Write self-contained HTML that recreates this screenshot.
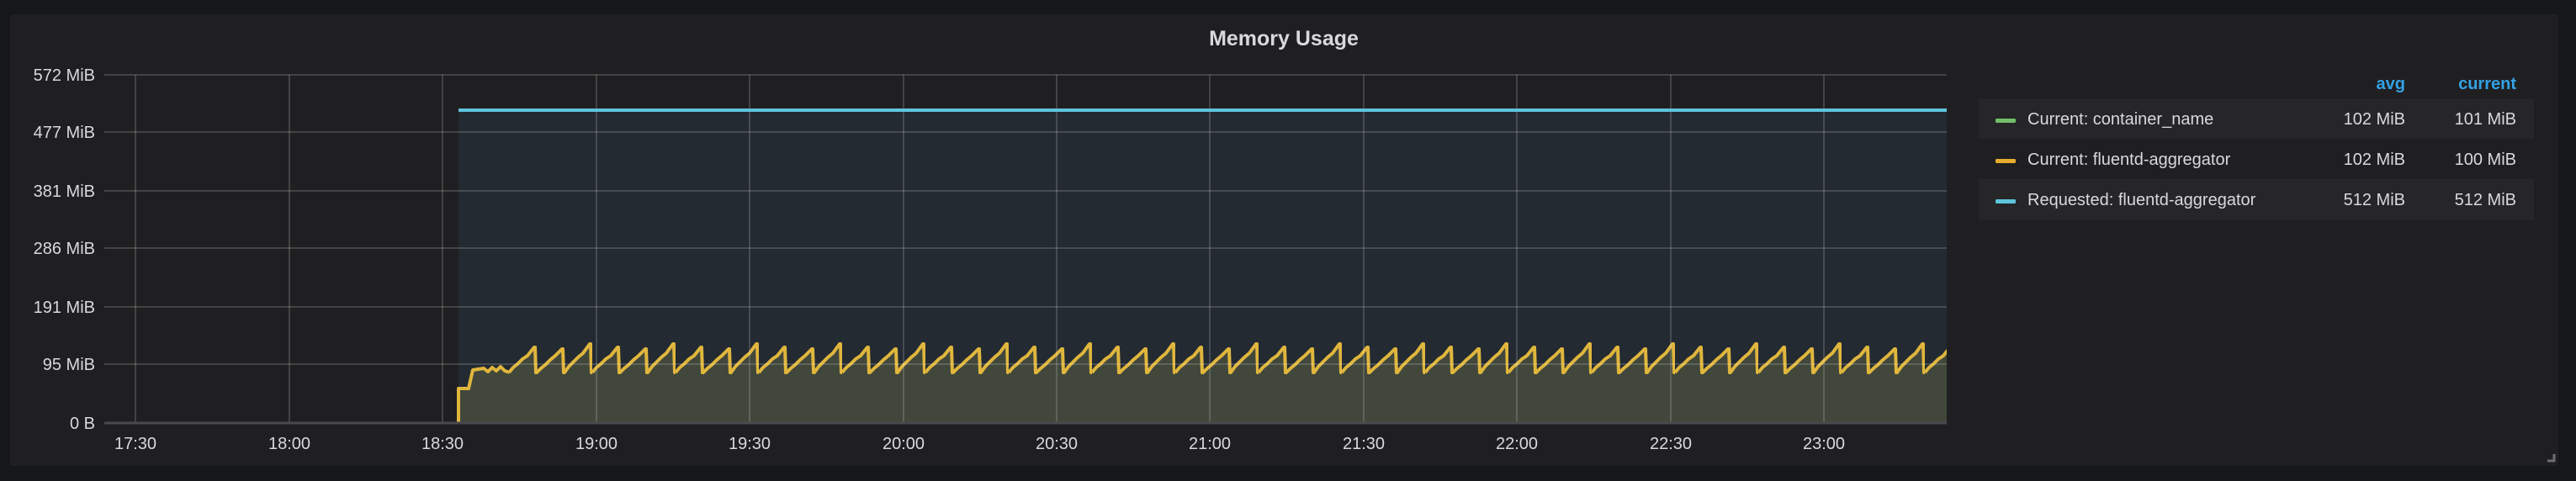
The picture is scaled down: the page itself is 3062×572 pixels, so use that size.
<!DOCTYPE html>
<html><head><meta charset="utf-8"><style>
html,body{margin:0;padding:0;background:#161719;width:3062px;height:572px;overflow:hidden}
svg{display:block}
text{font-family:"Liberation Sans",sans-serif}
</style></head><body>
<svg width="3062" height="572" viewBox="0 0 3062 572" xmlns="http://www.w3.org/2000/svg">
<defs>
<pattern id="teeth" patternUnits="userSpaceOnUse" x="605" y="0" width="99" height="572">
<path d="M0,443 l5,-6 l5,-4 l6,-6 l6,-4 l8,-10 l1,0 l1,30 l1,0 l5,-5 l5,-4 l6,-6 l6,-5 l8,-8 l1,0 l1,28 l1,0 l5,-7 l5,-5 l6,-6 l6,-5 l8,-11 l1,0 l1,34 l1,0 L99,503 L0,503 Z" fill="#41473b"/>
<path d="M0,443 l5,-6 l5,-4 l6,-6 l6,-4 l8,-10 l1,0 l1,30 l1,0 l5,-5 l5,-4 l6,-6 l6,-5 l8,-8 l1,0 l1,28 l1,0 l5,-7 l5,-5 l6,-6 l6,-5 l8,-11 l1,0 l1,34 l1,0" fill="none" stroke="#e0b63d" stroke-width="4" stroke-linejoin="round"/>
</pattern>
</defs>
<rect x="12" y="17" width="3029" height="537" rx="3" fill="#1f1f21"/>
<text x="1526" y="54" text-anchor="middle" font-size="25" font-weight="bold" fill="#d8d9da">Memory Usage</text>
<rect x="545" y="131" width="1769" height="372" fill="#232a31"/>
<path d="M545,503 L545,462 L557,462 L562,440 L575,438 L580,442 L585,437 L590,441 L595,436 L600,441 L605,443 L605,503 Z" fill="#41473b"/>
<path d="M545,503 L545,462 L557,462 L562,440 L575,438 L580,442 L585,437 L590,441 L595,436 L600,441 L606,443" fill="none" stroke="#e0b63d" stroke-width="4" stroke-linejoin="round"/>
<rect x="605" y="380" width="1709" height="123" fill="url(#teeth)"/>
<g stroke="#ffffff" stroke-opacity="0.16" stroke-width="2">
<line x1="124" y1="89" x2="2314" y2="89"/>
<line x1="124" y1="157" x2="2314" y2="157"/>
<line x1="124" y1="227" x2="2314" y2="227"/>
<line x1="124" y1="295" x2="2314" y2="295"/>
<line x1="124" y1="365" x2="2314" y2="365"/>
<line x1="124" y1="433" x2="2314" y2="433"/>
<line x1="161" y1="89" x2="161" y2="503"/>
<line x1="344" y1="89" x2="344" y2="503"/>
<line x1="526" y1="89" x2="526" y2="503"/>
<line x1="709" y1="89" x2="709" y2="503"/>
<line x1="891" y1="89" x2="891" y2="503"/>
<line x1="1074" y1="89" x2="1074" y2="503"/>
<line x1="1256" y1="89" x2="1256" y2="503"/>
<line x1="1438" y1="89" x2="1438" y2="503"/>
<line x1="1621" y1="89" x2="1621" y2="503"/>
<line x1="1803" y1="89" x2="1803" y2="503"/>
<line x1="1986" y1="89" x2="1986" y2="503"/>
<line x1="2168" y1="89" x2="2168" y2="503"/>
</g>
<line x1="124" y1="503" x2="2314" y2="503" stroke="#4a4a4d" stroke-width="3"/>
<line x1="545" y1="131" x2="2314" y2="131" stroke="#5ec4dc" stroke-width="4"/>
<g font-size="20" fill="#d8d9da" text-anchor="end">
<text x="113" y="96">572 MiB</text>
<text x="113" y="164">477 MiB</text>
<text x="113" y="234">381 MiB</text>
<text x="113" y="302">286 MiB</text>
<text x="113" y="372">191 MiB</text>
<text x="113" y="440">95 MiB</text>
<text x="113" y="510">0 B</text>
</g>
<g font-size="20" fill="#d8d9da" text-anchor="middle">
<text x="161" y="534">17:30</text>
<text x="344" y="534">18:00</text>
<text x="526" y="534">18:30</text>
<text x="709" y="534">19:00</text>
<text x="891" y="534">19:30</text>
<text x="1074" y="534">20:00</text>
<text x="1256" y="534">20:30</text>
<text x="1438" y="534">21:00</text>
<text x="1621" y="534">21:30</text>
<text x="1803" y="534">22:00</text>
<text x="1986" y="534">22:30</text>
<text x="2168" y="534">23:00</text>
</g>
<g font-size="20" font-weight="bold" fill="#33a2e5" text-anchor="end">
<text x="2859" y="106">avg</text>
<text x="2991" y="106">current</text>
</g>
<rect x="2352" y="118" width="660" height="47" fill="#262628"/>
<rect x="2352" y="213" width="660" height="49" fill="#262628"/>
<rect x="2372" y="141" width="24" height="5" rx="1.5" fill="#73bf69"/>
<rect x="2372" y="189" width="24" height="5" rx="1.5" fill="#e5ac2e"/>
<rect x="2372" y="237" width="24" height="5" rx="1.5" fill="#5ec4dc"/>
<g font-size="20" fill="#d8d9da">
<text x="2410" y="148">Current: container_name</text>
<text x="2410" y="196">Current: fluentd-aggregator</text>
<text x="2410" y="244">Requested: fluentd-aggregator</text>
</g>
<g font-size="20" fill="#d8d9da" text-anchor="end">
<text x="2859" y="148">102 MiB</text><text x="2991" y="148">101 MiB</text>
<text x="2859" y="196">102 MiB</text><text x="2991" y="196">100 MiB</text>
<text x="2859" y="244">512 MiB</text><text x="2991" y="244">512 MiB</text>
</g>
<path d="M3036,540 V548 H3028" fill="none" stroke="#6e6e72" stroke-width="3"/>
</svg>
</body></html>
